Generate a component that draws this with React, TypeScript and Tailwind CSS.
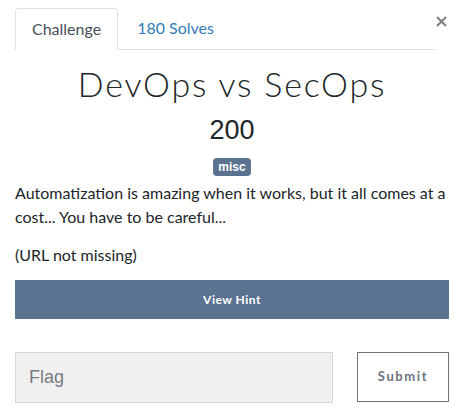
import React, { useState } from 'react';

export default function App() {
  const [flag, setFlag] = useState('');

  return (
    <div className="relative w-[467px] h-[414px] bg-white text-[#212529] pl-[15px] pr-[18px]" style={{ fontFamily: 'Lato, "Open Sans", sans-serif' }}>
      {/* close */}
      <button type="button" className="absolute left-[436px] top-[16px] w-[11px] h-[11px]">
        <svg viewBox="0 0 11 11" width="11" height="11" fill="none" stroke="#7f7f7f" strokeWidth="2">
          <path d="M1 1 L10 10 M10 1 L1 10" />
        </svg>
      </button>

      <div className="pt-[8px] pr-[14px]">
        <nav className="flex border-b border-[#dee2e6] text-[16px] leading-6">
          <span className="px-4 py-2 border border-[#dee2e6] border-b-white -mb-px rounded-t bg-white text-[#495057]">
            Challenge
          </span>
          <span className="px-4 py-2 ml-[3px] text-[#337ab7]">180 Solves</span>
        </nav>
      </div>

      <h1 className="mt-[14px] text-center text-[34px] leading-[40px] font-light tracking-[1.8px]">
        DevOps vs SecOps
      </h1>
      <h3
        className="mt-[8px] text-center text-[27px] leading-[36px]"
        style={{ fontFamily: '"Liberation Sans", Arial, sans-serif' }}
      >
        200
      </h3>
      <div className="mt-[10px] flex justify-center">
        <span
          className="inline-flex items-center h-[18px] px-[5px] rounded-[4px] bg-[#5b7290] text-white text-[12px] font-bold"
          style={{ fontFamily: '"Liberation Sans", Arial, sans-serif' }}
        >
          misc
        </span>
      </div>

      <div className="mt-[5px] text-[16px] leading-[24px]">
        <p>Automatization is amazing when it works, but it all comes at a cost... You have to be careful...</p>
        <p className="mt-[14px]">(URL not missing)</p>
      </div>

      <button
        type="button"
        className="mt-[13px] w-full h-[39px] bg-[#5b7290] text-white text-[12px] font-bold tracking-[0.5px]"
      >
        View Hint
      </button>

      <form className="mt-[33px] flex justify-between" onSubmit={(e) => e.preventDefault()}>
        <input
          value={flag}
          onChange={(e) => setFlag(e.target.value)}
          placeholder="Flag"
          className="w-[318px] h-[51px] bg-[#f0f0f0] border border-[#d4d7db] px-[13px] text-[18px] text-[#495057] placeholder:text-[#777c82] outline-none"
          style={{ fontFamily: '"Liberation Sans", Arial, sans-serif' }}
        />
        <button
          type="submit"
          className="w-[92px] h-[50px] border border-[#6c757d] text-[#6c757d] text-[13px] font-bold tracking-[1.6px]"
        >
          Submit
        </button>
      </form>
    </div>
  );
}
